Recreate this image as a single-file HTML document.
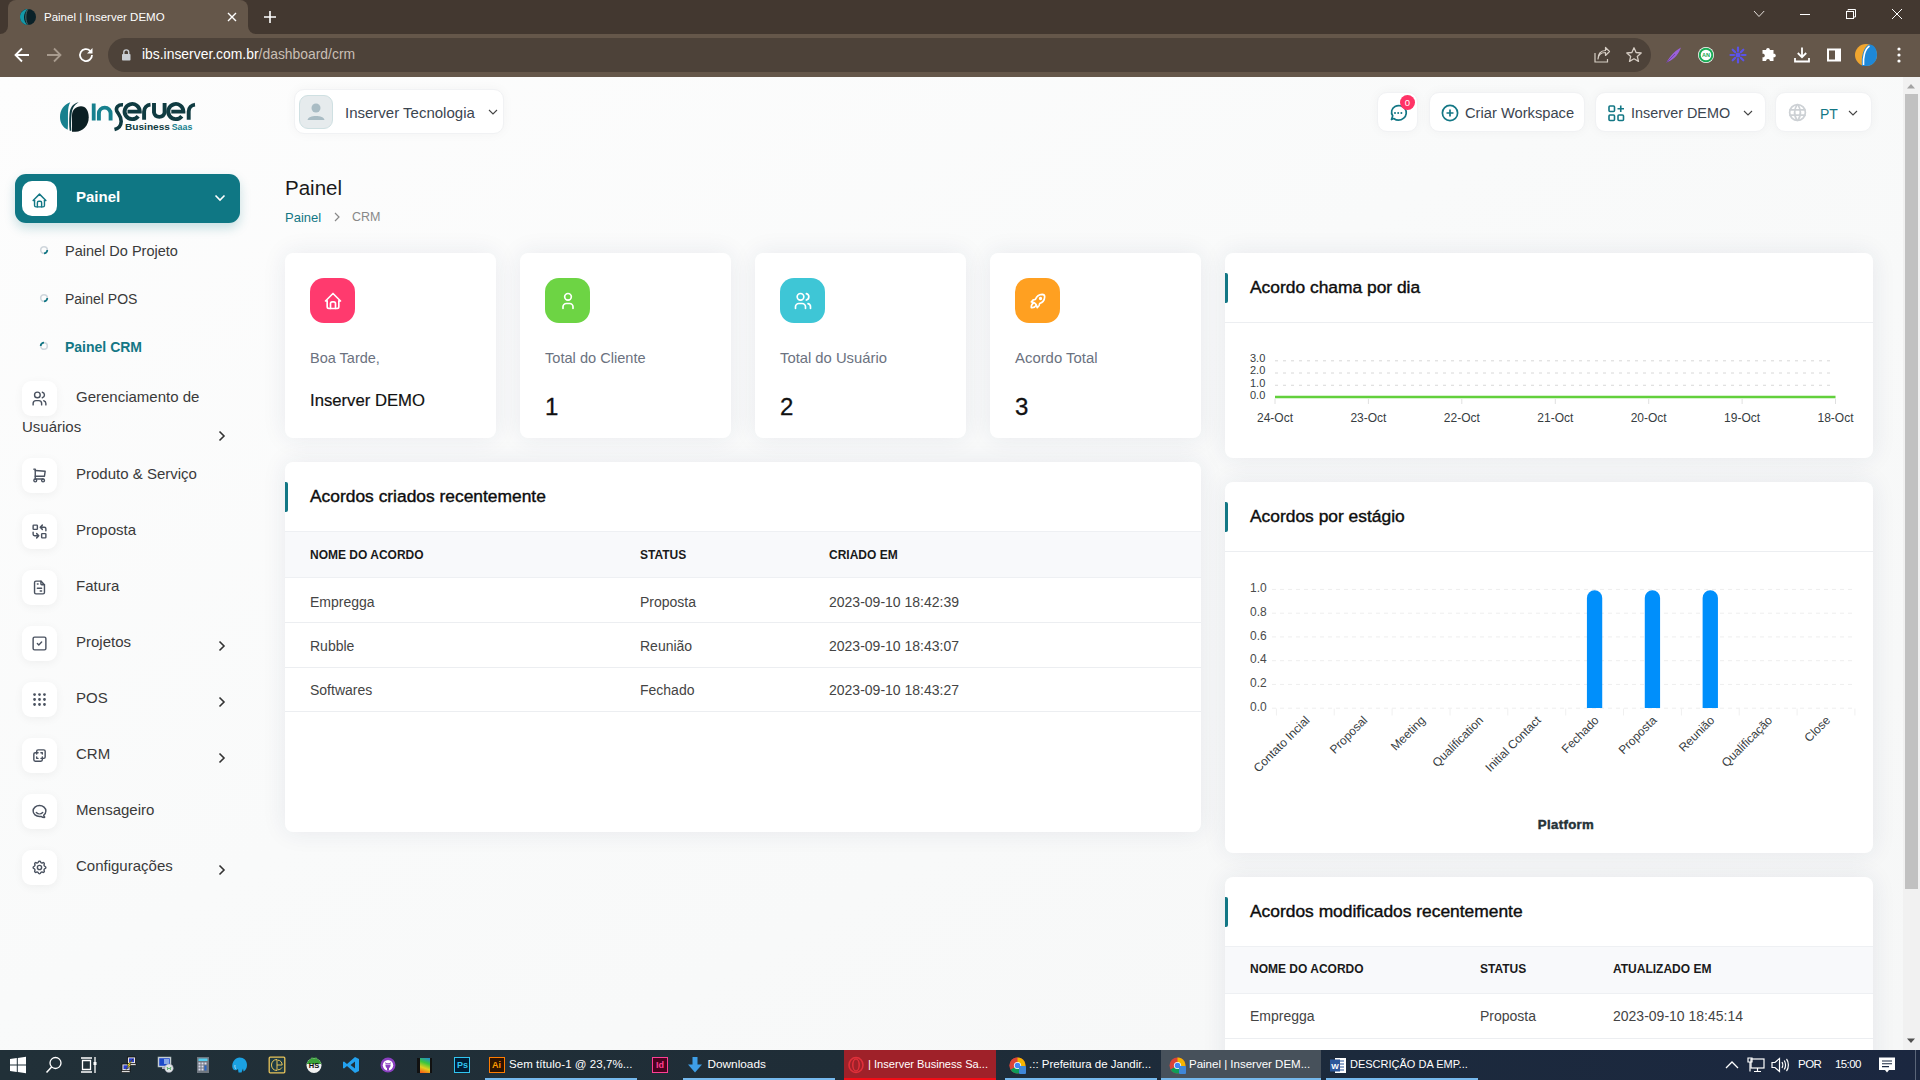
<!DOCTYPE html>
<html><head><meta charset="utf-8">
<style>
*{box-sizing:border-box;margin:0;padding:0}
html,body{width:1920px;height:1080px;overflow:hidden;font-family:"Liberation Sans",sans-serif;background:#f9faf9}
.a{position:absolute}
.t{position:absolute;white-space:nowrap;line-height:1}
svg{position:absolute;overflow:visible}
/* chrome */
#tabbar{left:0;top:0;width:1920px;height:34px;background:#433830}
#tab{left:8px;top:0;width:240px;height:34px;background:#65574a;border-radius:8px 8px 0 0}
#toolbar{left:0;top:34px;width:1920px;height:43px;background:#65574a}
#omni{left:108px;top:38px;width:1543px;height:34px;background:#4d4239;border-radius:17px}
/* page */
#page{left:0;top:77px;width:1903px;height:973px;background:linear-gradient(150deg,#fdfdfd 0%,#f9fafa 45%,#f6f7f7 100%);overflow:hidden}
.card{position:absolute;background:#fff;border-radius:8px;box-shadow:0 0 24px rgba(35,45,90,.085)}
.hdr{position:absolute;background:#fff;border-radius:10px;box-shadow:0 0 12px rgba(0,0,0,.04);border:1px solid #f1f2f4}
.side{position:absolute;left:22px;width:35px;height:35px;background:#fff;border-radius:9px;box-shadow:0 2px 10px rgba(0,0,0,.05)}
.stxt{position:absolute;left:76px;font-size:15px;color:#333;white-space:nowrap;line-height:1}
.chev{position:absolute;left:219px;width:6px;height:10px}
.bar3{position:absolute;left:0;width:3px;height:30px;background:#137785;border-radius:0 2px 2px 0}
.ttl{position:absolute;left:25px;font-size:17.4px;color:#0d0d0d;white-space:nowrap;line-height:1;font-weight:normal;-webkit-text-stroke:.4px #0d0d0d}
.th{position:absolute;font-size:12px;font-weight:bold;color:#1a1a1a;white-space:nowrap;line-height:1;letter-spacing:0}
.td{position:absolute;font-size:14px;color:#444;white-space:nowrap;line-height:1}
.hline{position:absolute;left:0;right:0;height:1px;background:#eceef1}
/* taskbar */
#task{left:0;top:1050px;width:1920px;height:30px;background:linear-gradient(90deg,#213038 0%,#1f2d37 45%,#1c2a3c 70%,#1b2740 100%)}
.tk{position:absolute;top:0;height:30px;color:#fff;font-size:12.5px;line-height:30px;white-space:nowrap}
</style></head><body>
<!-- BROWSER CHROME -->
<div id="tabbar" class="a"></div>
<div id="tab" class="a"></div>
<div id="toolbar" class="a"></div>
<div id="omni" class="a"></div>

<!-- tab flare -->
<div class="a" style="left:0;top:26px;width:8px;height:8px;background:#65574a"></div>
<div class="a" style="left:0;top:18px;width:8px;height:16px;background:#433830;border-radius:0 0 8px 0"></div>
<div class="a" style="left:248px;top:26px;width:8px;height:8px;background:#65574a"></div>
<div class="a" style="left:248px;top:18px;width:8px;height:16px;background:#433830;border-radius:0 0 0 8px"></div>
<svg width="18" height="18" style="left:19px;top:8px"><circle cx="9" cy="9" r="8" fill="#0a2128"/><path d="M8.5 1 C4 1.5 1 5 1 9 C1 13 4 16.5 8 17 C6 14.5 5 12 5 9 C5 6 6.5 3 8.5 1Z" fill="#1498a8"/><path d="M9 1.3 C7.5 3 6.8 6 6.8 9 C6.8 12 7.5 15 9 16.8" fill="none" stroke="#5a7f7f" stroke-width=".8"/></svg>
<div class="t" style="left:44px;top:11.5px;font-size:11.5px;color:#fff">Painel | Inserver DEMO</div>
<svg width="12" height="12" style="left:226px;top:11px"><path d="M2 2 L10 10 M10 2 L2 10" stroke="#fff" stroke-width="1.4"/></svg>
<svg width="16" height="16" style="left:262px;top:9px"><path d="M8 2 V14 M2 8 H14" stroke="#fff" stroke-width="1.6"/></svg>
<svg width="1920" height="34" style="left:0;top:0">
<path d="M1754 11 L1759 16.5 L1764.2 11" fill="none" stroke="#e6e1dc" stroke-width="1"/>
<path d="M1800 14.5 H1810" stroke="#fff" stroke-width="1"/>
<path d="M1848 10.5 V9.5 H1855.5 V17 H1854" fill="none" stroke="#fff" stroke-width="1"/>
<rect x="1846.5" y="11.5" width="7" height="7" fill="none" stroke="#fff" stroke-width="1"/>
<path d="M1892 9 L1902 19 M1902 9 L1892 19" stroke="#fff" stroke-width="1"/>
</svg>
<!-- toolbar icons -->
<svg width="18" height="18" style="left:13px;top:46px"><path d="M16 9 H3 M9 2.5 L2.5 9 L9 15.5" fill="none" stroke="#fff" stroke-width="1.8"/></svg>
<svg width="18" height="18" style="left:45px;top:46px"><path d="M2 9 H15 M9 2.5 L15.5 9 L9 15.5" fill="none" stroke="#a89b8e" stroke-width="1.8"/></svg>
<svg width="18" height="18" style="left:77px;top:46px"><path d="M15 9 A6 6 0 1 1 13.2 4.8" fill="none" stroke="#fff" stroke-width="1.8"/><path d="M15.5 2 V7.5 H10 Z" fill="#fff"/></svg>
<svg width="12" height="14" style="left:120px;top:48px"><rect x="2" y="6" width="8.5" height="6.5" rx=".8" fill="#c9ced4"/><path d="M3.8 6.5 V4.3 A2.45 2.45 0 0 1 8.7 4.3 V6.5" fill="none" stroke="#c9ced4" stroke-width="1.4"/></svg>
<div class="t" style="left:142px;top:47.8px;font-size:13.9px;color:#fff">ibs.inserver.com.br<span style="color:#c9bfb5">/dashboard/crm</span></div>
<svg width="18" height="18" style="left:1593px;top:46px"><path d="M2 7 V16 H14.5 V13" fill="none" stroke="#d6cdc4" stroke-width="1.2"/><path d="M5 13 C5.5 8.5 8.5 6.5 12.5 6.5 V9.5 L16.5 5.5 L12.5 1.5 V4.5 C7.5 4.5 5 8 5 13Z" fill="none" stroke="#d6cdc4" stroke-width="1.2" stroke-linejoin="round"/></svg>
<svg width="18" height="18" style="left:1625px;top:46px"><path d="M9 1.8 L11.1 6.5 L16.2 7 L12.3 10.4 L13.5 15.4 L9 12.8 L4.5 15.4 L5.7 10.4 L1.8 7 L6.9 6.5 Z" fill="none" stroke="#d6cdc4" stroke-width="1.3" stroke-linejoin="round"/></svg>
<svg width="18" height="18" style="left:1665px;top:46px"><path d="M1.5 16.5 C4 12 8 6 16 1.5 C14 7 10 13 3.5 15.5 Z" fill="#9b62d9"/><path d="M1.5 16.5 L10 8" stroke="#6c3aa8" stroke-width=".8"/></svg>
<svg width="18" height="18" style="left:1697px;top:46px"><circle cx="9" cy="9" r="8" fill="#fff"/><circle cx="9" cy="9" r="6.3" fill="none" stroke="#1aaa55" stroke-width="2"/><text x="9" y="11.3" font-size="5.5" font-weight="bold" fill="#1aaa55" text-anchor="middle" font-family="Liberation Sans">AN</text></svg>
<svg width="18" height="18" style="left:1729px;top:46px"><g stroke="#5b53e8" stroke-width="2.2" stroke-linecap="round"><path d="M9 1.5 V5 M9 13 V16.5 M1.5 9 H5 M13 9 H16.5 M3.7 3.7 L6.2 6.2 M11.8 11.8 L14.3 14.3 M3.7 14.3 L6.2 11.8 M11.8 6.2 L14.3 3.7"/></g><circle cx="9" cy="9" r="2.5" fill="#5b53e8"/></svg>
<svg width="18" height="18" style="left:1761px;top:46px"><path d="M7 2 C8.5 2 9 3 8.8 4 H12.5 V7.7 C13.5 7.5 14.8 8 14.8 9.5 C14.8 11 13.5 11.5 12.5 11.3 V15 H8.8 C9 14 8.5 13 7 13 C5.5 13 5 14 5.2 15 H1.5 V11.3 C2.5 11.5 3.8 11 3.8 9.5 C3.8 8 2.5 7.5 1.5 7.7 V4 H5.2 C5 3 5.5 2 7 2Z" fill="#fff"/></svg>
<svg width="18" height="18" style="left:1793px;top:46px"><path d="M9 1.5 V11 M4.8 7 L9 11.2 L13.2 7 M2 12 V15.5 H16 V12" fill="none" stroke="#fff" stroke-width="1.8"/></svg>
<svg width="18" height="18" style="left:1825px;top:46px"><rect x="2" y="2.5" width="14" height="13" fill="#fff"/><rect x="4" y="4.5" width="6" height="9" fill="#65574a"/></svg>
<svg width="24" height="24" style="left:1854px;top:43px"><circle cx="12" cy="12" r="11" fill="#f0a630"/><path d="M8 23 C7 15 9 4 15 1.5 C19 1 23 5 23 12 C23 18 19 22.5 13 23Z" fill="#1e88d8"/><path d="M9.5 22 C9 15 10.5 6 15.5 3" fill="none" stroke="#fff" stroke-width="1.6"/></svg>
<svg width="6" height="18" style="left:1896px;top:46px"><circle cx="3" cy="3" r="1.6" fill="#fff"/><circle cx="3" cy="9" r="1.6" fill="#fff"/><circle cx="3" cy="15" r="1.6" fill="#fff"/></svg>


<!-- PAGE -->
<div id="page" class="a"></div>

<!-- logo -->
<svg width="200" height="140" style="left:0;top:0" viewBox="0 0 200 140">
 <path d="M70.3 102.3 C64 104.5 60 110 60 117 C60 123 63 127.5 67.7 129.7 C68.3 124 67.8 118 68 112 C68.2 108 68.8 105 70.3 102.3 Z" fill="#17808e"/>
 <path d="M78.7 102.3 C73 103.5 70 107.5 69.5 114 C69 120 69.2 126 69.7 130.7 L71.3 130.7 C70.9 125 71.1 120 71.6 114 C72.1 108.5 74.6 104.5 78.7 102.3 Z" fill="#0f3b41"/>
 <path d="M72 131.7 V115 C72 110 76 106.3 81 106.3 C86 106.3 88.7 111 88.7 117.5 C88.7 125.5 83 131.7 75.5 131.7 Z" fill="#0b1f23"/>
 <rect x="91.8" y="103.5" width="3.8" height="17" fill="#17808e"/>
 <path d="M98.9 120.5 V113.5 A5.8 5.8 0 0 1 110.6 113.5 V120.5" fill="none" stroke="#17808e" stroke-width="3.9"/>
 <path d="M123 104.8 C118 104.5 115.5 107.5 116.8 111 C118 114 121.5 116 121.2 121.5 C121 126 118.5 128.5 114.5 129.5" fill="none" stroke="#0f3b41" stroke-width="3.6" stroke-linecap="butt"/>
 <path d="M127.5 111.6 H139.8 A7.6 7.6 0 1 0 138.2 116.2" fill="none" stroke="#0f3b41" stroke-width="3.9"/>
 <path d="M144.1 119.7 V111.5 A7 7 0 0 1 150.5 104.6" fill="none" stroke="#0f3b41" stroke-width="3.9"/>
 <path d="M154 103 V112.5 A5.4 5.4 0 0 0 164.6 112.5 V103" fill="none" stroke="#0f3b41" stroke-width="3.9"/>
 <path d="M171.3 111.6 H183.4 A7.6 7.6 0 1 0 181.8 116.2" fill="none" stroke="#0f3b41" stroke-width="3.9"/>
 <path d="M188.7 119.7 V111.5 A7 7 0 0 1 195 104.6" fill="none" stroke="#0f3b41" stroke-width="3.9"/>
 <text x="125" y="129.9" font-family="Liberation Sans" font-weight="bold" font-size="9.6" fill="#0f3b41" textLength="45" lengthAdjust="spacingAndGlyphs">Business</text>
 <text x="171.7" y="129.9" font-family="Liberation Sans" font-weight="bold" font-size="9.6" fill="#17808e" textLength="20.6" lengthAdjust="spacingAndGlyphs">Saas</text>
</svg>

<!-- header dropdown -->
<div class="hdr" style="left:294px;top:89px;width:210px;height:45px"></div>
<div class="a" style="left:299px;top:95px;width:34px;height:34px;background:#e6ebed;border:1px solid #cfe0e2;border-radius:9px"></div>
<svg width="34" height="34" style="left:299px;top:95px"><circle cx="17" cy="13" r="4.5" fill="#a9bcc4"/><path d="M8.5 25 C9 19.5 25 19.5 25.5 25 Z" fill="#a9bcc4"/></svg>
<div class="t" style="left:345px;top:104.8px;font-size:15px;color:#3b4550">Inserver Tecnologia</div>
<svg width="10" height="6" style="left:488px;top:109px"><path d="M1 1 L5 5 L9 1" fill="none" stroke="#444" stroke-width="1.1"/></svg>

<!-- right header -->
<div class="hdr" style="left:1377px;top:91.5px;width:41px;height:40.5px"></div>
<svg width="20" height="20" style="left:1388px;top:103px"><path d="M3.5 16.5 L4.7 12.8 C2.5 9.5 3.6 5.3 7 3.5 C10.4 1.7 14.7 2.6 16.9 5.6 C19.1 8.6 18.6 12.7 15.7 15.1 C12.8 17.5 8.7 17.6 5.7 15.5 Z" fill="none" stroke="#137785" stroke-width="1.7" stroke-linejoin="round"/><circle cx="7" cy="10" r="1" fill="#137785"/><circle cx="10.2" cy="10" r="1" fill="#137785"/><circle cx="13.4" cy="10" r="1" fill="#137785"/></svg>
<div class="a" style="left:1400px;top:95px;width:15px;height:15px;border-radius:50%;background:#ff3366"></div>
<div class="t" style="left:1400px;top:97.5px;width:15px;text-align:center;font-size:9.5px;color:#fff">0</div>

<div class="hdr" style="left:1429px;top:91.5px;width:156px;height:40.5px"></div>
<svg width="18" height="18" style="left:1441px;top:104px"><circle cx="9" cy="9" r="7.6" fill="none" stroke="#137785" stroke-width="1.7"/><path d="M9 5.5 V12.5 M5.5 9 H12.5" stroke="#137785" stroke-width="1.7"/></svg>
<div class="t" style="left:1465px;top:105.5px;font-size:14.7px;color:#3b4550">Criar Workspace</div>

<div class="hdr" style="left:1595px;top:91.5px;width:171px;height:40.5px"></div>
<svg width="17" height="17" style="left:1608px;top:105px"><rect x="1" y="1" width="5.5" height="5.5" rx="1" fill="none" stroke="#137785" stroke-width="1.6"/><rect x="1" y="10" width="5.5" height="5.5" rx="1" fill="none" stroke="#137785" stroke-width="1.6"/><rect x="10" y="10" width="5.5" height="5.5" rx="1" fill="none" stroke="#137785" stroke-width="1.6"/><path d="M12.75 0.5 V7 M9.5 3.75 H16" stroke="#137785" stroke-width="1.6"/></svg>
<div class="t" style="left:1631px;top:105.5px;font-size:14.4px;color:#3b4550">Inserver DEMO</div>
<svg width="10" height="6" style="left:1743px;top:109.5px"><path d="M1 1 L5 5 L9 1" fill="none" stroke="#444" stroke-width="1.1"/></svg>

<div class="hdr" style="left:1775px;top:91.5px;width:97px;height:40.5px"></div>
<svg width="21" height="21" viewBox="0 0 24 24" style="left:1786.5px;top:101.5px" fill="none" stroke="#cdd1d5" stroke-width="2" stroke-linecap="round" stroke-linejoin="round"><path d="M3 12a9 9 0 1 0 18 0a9 9 0 0 0 -18 0"/><path d="M3.6 9h16.8"/><path d="M3.6 15h16.8"/><path d="M11.5 3a17 17 0 0 0 0 18"/><path d="M12.5 3a17 17 0 0 1 0 18"/></svg>
<div class="t" style="left:1820px;top:106.5px;font-size:14px;color:#137785">PT</div>
<svg width="10" height="6" style="left:1848px;top:109.5px"><path d="M1 1 L5 5 L9 1" fill="none" stroke="#444" stroke-width="1.1"/></svg>

<!-- title -->
<div class="t" style="left:285px;top:178.4px;font-size:20.5px;color:#1a1a1a">Painel</div>
<div class="t" style="left:285px;top:211.3px;font-size:13px;color:#137785">Painel</div>
<svg width="6" height="10" style="left:334px;top:212px"><path d="M1 1 L5 5 L1 9" fill="none" stroke="#888" stroke-width="1.2"/></svg>
<div class="t" style="left:352px;top:211.3px;font-size:12.5px;color:#888">CRM</div>

<!-- SIDEBAR -->
<div class="a" style="left:15px;top:174px;width:225px;height:49px;background:#0f7784;border-radius:11px;box-shadow:0 5px 11px rgba(15,119,132,.22)"></div>
<div class="a" style="left:22px;top:181px;width:35px;height:35px;background:#fff;border-radius:10px"></div>
<svg width="17" height="17" viewBox="0 0 24 24" style="left:31px;top:191.5px" fill="none" stroke="#137785" stroke-width="2" stroke-linecap="round" stroke-linejoin="round"><path d="M5 12l-2 0l9 -9l9 9l-2 0"/><path d="M5 12v7a2 2 0 0 0 2 2h10a2 2 0 0 0 2 -2v-7"/><path d="M9 21v-6a2 2 0 0 1 2 -2h2a2 2 0 0 1 2 2v6"/></svg>
<div class="t" style="left:76px;top:189.2px;font-size:15px;font-weight:bold;color:#fff">Painel</div>
<svg width="12" height="8" style="left:214px;top:194px"><path d="M1.5 1.5 L6 6 L10.5 1.5" fill="none" stroke="#fff" stroke-width="1.6"/></svg>

<svg width="10" height="10" style="left:39px;top:245px"><circle cx="5" cy="5" r="3.3" fill="none" stroke="#cfd6dc" stroke-width="1.6"/><path d="M8.3 5 A3.3 3.3 0 0 1 5 8.3" fill="none" stroke="#137785" stroke-width="1.8"/></svg>
<div class="t" style="left:65px;top:244.1px;font-size:14.5px;color:#3a3a3a">Painel Do Projeto</div>
<svg width="10" height="10" style="left:39px;top:293px"><circle cx="5" cy="5" r="3.3" fill="none" stroke="#cfd6dc" stroke-width="1.6"/><path d="M8.3 5 A3.3 3.3 0 0 1 5 8.3" fill="none" stroke="#137785" stroke-width="1.8"/></svg>
<div class="t" style="left:65px;top:292px;font-size:14px;color:#3a3a3a">Painel POS</div>
<svg width="10" height="10" style="left:39px;top:341px"><circle cx="5" cy="5" r="3.3" fill="none" stroke="#cfd6dc" stroke-width="1.6"/><path d="M1.7 5 A3.3 3.3 0 0 1 5 1.7" fill="none" stroke="#137785" stroke-width="1.8"/></svg>
<div class="t" style="left:65px;top:340.1px;font-size:14px;font-weight:bold;color:#137785">Painel CRM</div>

<div class="side" style="top:381px"></div>
<svg width="17" height="17" viewBox="0 0 24 24" style="left:31px;top:390.0px" fill="none" stroke="#4a5260" stroke-width="2" stroke-linecap="round" stroke-linejoin="round"><path d="M9 7m-4 0a4 4 0 1 0 8 0a4 4 0 1 0 -8 0"/><path d="M3 21v-2a4 4 0 0 1 4 -4h4a4 4 0 0 1 4 4v2"/><path d="M16 3.13a4 4 0 0 1 0 7.75"/><path d="M21 21v-2a4 4 0 0 0 -3 -3.85"/></svg>
<div class="t" style="left:76px;top:389.3px;font-size:15px;color:#3a3a3a">Gerenciamento de</div>
<div class="t" style="left:22px;top:419.2px;font-size:15px;color:#3a3a3a">Usuários</div>
<svg width="8" height="12" style="left:218px;top:430px"><path d="M1.5 1.5 L6 6 L1.5 10.5" fill="none" stroke="#333" stroke-width="1.6"/></svg>

<div class="side" style="top:458px"></div>
<svg width="17" height="17" viewBox="0 0 24 24" style="left:31px;top:467.0px" fill="none" stroke="#4a5260" stroke-width="2" stroke-linecap="round" stroke-linejoin="round"><path d="M6 19m-2 0a2 2 0 1 0 4 0a2 2 0 1 0 -4 0"/><path d="M17 19m-2 0a2 2 0 1 0 4 0a2 2 0 1 0 -4 0"/><path d="M17 17h-11v-14h-2"/><path d="M6 5l14 1l-1 7h-13"/></svg>
<div class="t" style="left:76px;top:466px;font-size:15px;color:#3a3a3a">Produto &amp; Serviço</div>

<div class="side" style="top:514px"></div>
<svg width="17" height="17" viewBox="0 0 24 24" style="left:31px;top:523.0px" fill="none" stroke="#4a5260" stroke-width="2" stroke-linecap="round" stroke-linejoin="round"><path d="M3 3m0 1a1 1 0 0 1 1 -1h4a1 1 0 0 1 1 1v4a1 1 0 0 1 -1 1h-4a1 1 0 0 1 -1 -1z"/><path d="M15 15m0 1a1 1 0 0 1 1 -1h4a1 1 0 0 1 1 1v4a1 1 0 0 1 -1 1h-4a1 1 0 0 1 -1 -1z"/><path d="M21 11v-3a2 2 0 0 0 -2 -2h-6l3 3m0 -6l-3 3"/><path d="M3 13v3a2 2 0 0 0 2 2h6l-3 -3m0 6l3 -3"/></svg>
<div class="t" style="left:76px;top:522.3px;font-size:15px;color:#3a3a3a">Proposta</div>

<div class="side" style="top:570px"></div>
<svg width="17" height="17" viewBox="0 0 24 24" style="left:31px;top:579.0px" fill="none" stroke="#4a5260" stroke-width="2" stroke-linecap="round" stroke-linejoin="round"><path d="M14 3v4a1 1 0 0 0 1 1h4"/><path d="M17 21h-10a2 2 0 0 1 -2 -2v-14a2 2 0 0 1 2 -2h7l5 5v11a2 2 0 0 1 -2 2z"/><path d="M9 7l1 0"/><path d="M9 13l6 0"/><path d="M13 17l2 0"/></svg>
<div class="t" style="left:76px;top:578.3px;font-size:15px;color:#3a3a3a">Fatura</div>

<div class="side" style="top:626px"></div>
<svg width="17" height="17" viewBox="0 0 24 24" style="left:31px;top:635.0px" fill="none" stroke="#4a5260" stroke-width="2" stroke-linecap="round" stroke-linejoin="round"><path d="M3 3m0 2a2 2 0 0 1 2 -2h14a2 2 0 0 1 2 2v14a2 2 0 0 1 -2 2h-14a2 2 0 0 1 -2 -2z"/><path d="M9 12l2 2l4 -4"/></svg>
<div class="t" style="left:76px;top:634.3px;font-size:15px;color:#3a3a3a">Projetos</div>
<svg width="8" height="12" style="left:218px;top:640px"><path d="M1.5 1.5 L6 6 L1.5 10.5" fill="none" stroke="#333" stroke-width="1.6"/></svg>

<div class="side" style="top:682px"></div>
<svg width="17" height="17" viewBox="0 0 24 24" style="left:31px;top:691.0px" fill="none" stroke="#4a5260" stroke-width="2" stroke-linecap="round" stroke-linejoin="round"><path d="M5 5m-1 0a1 1 0 1 0 2 0a1 1 0 1 0 -2 0"/><path d="M12 5m-1 0a1 1 0 1 0 2 0a1 1 0 1 0 -2 0"/><path d="M19 5m-1 0a1 1 0 1 0 2 0a1 1 0 1 0 -2 0"/><path d="M5 12m-1 0a1 1 0 1 0 2 0a1 1 0 1 0 -2 0"/><path d="M12 12m-1 0a1 1 0 1 0 2 0a1 1 0 1 0 -2 0"/><path d="M19 12m-1 0a1 1 0 1 0 2 0a1 1 0 1 0 -2 0"/><path d="M5 19m-1 0a1 1 0 1 0 2 0a1 1 0 1 0 -2 0"/><path d="M12 19m-1 0a1 1 0 1 0 2 0a1 1 0 1 0 -2 0"/><path d="M19 19m-1 0a1 1 0 1 0 2 0a1 1 0 1 0 -2 0"/></svg>
<div class="t" style="left:76px;top:690.3px;font-size:15px;color:#3a3a3a">POS</div>
<svg width="8" height="12" style="left:218px;top:696px"><path d="M1.5 1.5 L6 6 L1.5 10.5" fill="none" stroke="#333" stroke-width="1.6"/></svg>

<div class="side" style="top:738px"></div>
<svg width="17" height="17" viewBox="0 0 24 24" style="left:31px;top:747.0px" fill="none" stroke="#4a5260" stroke-width="2" stroke-linecap="round" stroke-linejoin="round"><path d="M16 16v2a2 2 0 0 1 -2 2h-8a2 2 0 0 1 -2 -2v-8a2 2 0 0 1 2 -2h2v-2a2 2 0 0 1 2 -2h8a2 2 0 0 1 2 2v8a2 2 0 0 1 -2 2h-2"/><path d="M10 8l-2 0l0 2"/><path d="M8 14l0 2l2 0"/><path d="M14 8l2 0l0 2"/><path d="M16 14l0 2l-2 0"/></svg>
<div class="t" style="left:76px;top:746.3px;font-size:15px;color:#3a3a3a">CRM</div>
<svg width="8" height="12" style="left:218px;top:752px"><path d="M1.5 1.5 L6 6 L1.5 10.5" fill="none" stroke="#333" stroke-width="1.6"/></svg>

<div class="side" style="top:794px"></div>
<svg width="17" height="17" viewBox="0 0 24 24" style="left:31px;top:803.0px" fill="none" stroke="#4a5260" stroke-width="2" stroke-linecap="round" stroke-linejoin="round"><path d="M17.802 17.292s.077 -.055 .2 -.149c1.843 -1.425 3 -3.49 3 -5.789c0 -4.286 -4.03 -7.764 -9 -7.764c-4.97 0 -9 3.478 -9 7.764c0 4.288 4.03 7.646 9 7.646c.424 0 1.12 -.028 2.088 -.084c1.262 .82 3.104 1.493 4.716 1.493c.499 0 .734 -.41 .414 -.828c-.486 -.596 -1.156 -1.551 -1.416 -2.29z"/><path d="M7.5 13.5c2.5 2.5 6.5 2.5 9 0"/></svg>
<div class="t" style="left:76px;top:802.3px;font-size:15px;color:#3a3a3a">Mensageiro</div>

<div class="side" style="top:850px"></div>
<svg width="17" height="17" viewBox="0 0 24 24" style="left:31px;top:859.0px" fill="none" stroke="#4a5260" stroke-width="2" stroke-linecap="round" stroke-linejoin="round"><path d="M10.325 4.317c.426 -1.756 2.924 -1.756 3.35 0a1.724 1.724 0 0 0 2.573 1.066c1.543 -.94 3.31 .826 2.37 2.37a1.724 1.724 0 0 0 1.065 2.572c1.756 .426 1.756 2.924 0 3.35a1.724 1.724 0 0 0 -1.066 2.573c.94 1.543 -.826 3.31 -2.37 2.37a1.724 1.724 0 0 0 -2.572 1.065c-.426 1.756 -2.924 1.756 -3.35 0a1.724 1.724 0 0 0 -2.573 -1.066c-1.543 .94 -3.31 -.826 -2.37 -2.37a1.724 1.724 0 0 0 -1.065 -2.572c-1.756 -.426 -1.756 -2.924 0 -3.35a1.724 1.724 0 0 0 1.066 -2.573c-.94 -1.543 .826 -3.31 2.37 -2.37c1 .608 2.296 .07 2.572 -1.065z"/><path d="M9 12a3 3 0 1 0 6 0a3 3 0 0 0 -6 0"/></svg>
<div class="t" style="left:76px;top:858.3px;font-size:15px;color:#3a3a3a">Configurações</div>
<svg width="8" height="12" style="left:218px;top:864px"><path d="M1.5 1.5 L6 6 L1.5 10.5" fill="none" stroke="#333" stroke-width="1.6"/></svg>

<!-- CONTENT -->
<!-- stat cards -->
<div class="card" style="left:285px;top:253px;width:211px;height:185px"></div>
<div class="card" style="left:520px;top:253px;width:211px;height:185px"></div>
<div class="card" style="left:755px;top:253px;width:211px;height:185px"></div>
<div class="card" style="left:990px;top:253px;width:211px;height:185px"></div>

<div class="a" style="left:310px;top:278px;width:45px;height:45px;border-radius:14px;background:#ff3a6e"></div>
<svg width="20" height="20" viewBox="0 0 24 24" style="left:322.5px;top:290.8px" fill="none" stroke="#fff" stroke-width="2" stroke-linecap="round" stroke-linejoin="round"><path d="M5 12l-2 0l9 -9l9 9l-2 0"/><path d="M5 12v7a2 2 0 0 0 2 2h10a2 2 0 0 0 2 -2v-7"/><path d="M9 21v-6a2 2 0 0 1 2 -2h2a2 2 0 0 1 2 2v6"/></svg>
<div class="a" style="left:545px;top:278px;width:45px;height:45px;border-radius:14px;background:#6dd444"></div>
<svg width="20" height="20" viewBox="0 0 24 24" style="left:557.5px;top:290.8px" fill="none" stroke="#fff" stroke-width="2" stroke-linecap="round" stroke-linejoin="round"><path d="M8 7a4 4 0 1 0 8 0a4 4 0 0 0 -8 0"/><path d="M6 21v-2a4 4 0 0 1 4 -4h4a4 4 0 0 1 4 4v2"/></svg>
<div class="a" style="left:780px;top:278px;width:45px;height:45px;border-radius:14px;background:#3ec6d6"></div>
<svg width="20" height="20" viewBox="0 0 24 24" style="left:792.5px;top:290.8px" fill="none" stroke="#fff" stroke-width="2" stroke-linecap="round" stroke-linejoin="round"><path d="M9 7m-4 0a4 4 0 1 0 8 0a4 4 0 1 0 -8 0"/><path d="M3 21v-2a4 4 0 0 1 4 -4h4a4 4 0 0 1 4 4v2"/><path d="M16 3.13a4 4 0 0 1 0 7.75"/><path d="M21 21v-2a4 4 0 0 0 -3 -3.85"/></svg>
<div class="a" style="left:1015px;top:278px;width:45px;height:45px;border-radius:14px;background:#ffa021"></div>
<svg width="20" height="20" viewBox="0 0 24 24" style="left:1027.5px;top:290.8px" fill="none" stroke="#fff" stroke-width="2" stroke-linecap="round" stroke-linejoin="round"><path d="M4 13a8 8 0 0 1 7 7a6 6 0 0 0 3 -5a9 9 0 0 0 6 -8a3 3 0 0 0 -3 -3a9 9 0 0 0 -8 6a6 6 0 0 0 -5 3"/><path d="M7 14a6 6 0 0 0 -3 6a6 6 0 0 0 6 -3"/><path d="M15 9m-1 0a1 1 0 1 0 2 0a1 1 0 1 0 -2 0"/></svg>

<div class="t" style="left:310px;top:350.7px;font-size:14.5px;color:#6b7280">Boa Tarde,</div>
<div class="t" style="left:310px;top:393.4px;font-size:16.7px;color:#111;-webkit-text-stroke:.2px #111">Inserver DEMO</div>
<div class="t" style="left:545px;top:350.7px;font-size:14.6px;color:#6b7280">Total do Cliente</div>
<div class="t" style="left:545px;top:394.7px;font-size:24px;color:#111;-webkit-text-stroke:.3px #111">1</div>
<div class="t" style="left:780px;top:350.7px;font-size:14.8px;color:#6b7280">Total do Usuário</div>
<div class="t" style="left:780px;top:394.7px;font-size:24px;color:#111;-webkit-text-stroke:.3px #111">2</div>
<div class="t" style="left:1015px;top:350.7px;font-size:14.9px;color:#6b7280">Acordo Total</div>
<div class="t" style="left:1015px;top:394.7px;font-size:24px;color:#111;-webkit-text-stroke:.3px #111">3</div>

<!-- table card -->
<div class="card" style="left:285px;top:462px;width:916px;height:370px;overflow:hidden">
 <div class="bar3" style="top:20px"></div>
 <div class="ttl" style="top:25.8px">Acordos criados recentemente</div>
 <div class="a" style="left:0;top:69px;width:916px;height:47px;background:#f8f9fb;border-top:1px solid #eef0f3;border-bottom:1px solid #eef0f3"></div>
 <div class="th" style="left:25px;top:87.1px">NOME DO ACORDO</div>
 <div class="th" style="left:355px;top:87.1px">STATUS</div>
 <div class="th" style="left:544px;top:87.1px">CRIADO EM</div>
 <div class="td" style="left:25px;top:132.9px">Empregga</div>
 <div class="td" style="left:355px;top:132.9px">Proposta</div>
 <div class="td" style="left:544px;top:132.9px">2023-09-10 18:42:39</div>
 <div class="hline" style="top:160px"></div>
 <div class="td" style="left:25px;top:176.9px">Rubble</div>
 <div class="td" style="left:355px;top:176.9px">Reunião</div>
 <div class="td" style="left:544px;top:176.9px">2023-09-10 18:43:07</div>
 <div class="hline" style="top:205px"></div>
 <div class="td" style="left:25px;top:220.9px">Softwares</div>
 <div class="td" style="left:355px;top:220.9px">Fechado</div>
 <div class="td" style="left:544px;top:220.9px">2023-09-10 18:43:27</div>
 <div class="hline" style="top:249px"></div>
</div>

<!-- chart 1 -->
<div class="card" style="left:1225px;top:253px;width:648px;height:205px;overflow:hidden">
 <div class="bar3" style="top:20px"></div>
 <div class="ttl" style="top:26.1px">Acordo chama por dia</div>
 <div class="hline" style="top:69px"></div>
</div>


<!-- chart 2 -->
<div class="card" style="left:1225px;top:482px;width:648px;height:371px;overflow:hidden">
 <div class="bar3" style="top:20px"></div>
 <div class="ttl" style="top:25.7px">Acordos por estágio</div>
 <div class="hline" style="top:69px"></div>
</div>
<svg width="1920" height="1080" style="left:0;top:0;pointer-events:none" font-family="Liberation Sans">
<text x="1250" y="361.8" font-size="11" fill="#373d3f">3.0</text>
<text x="1250" y="373.9" font-size="11" fill="#373d3f">2.0</text>
<text x="1250" y="386.7" font-size="11" fill="#373d3f">1.0</text>
<text x="1250" y="398.75" font-size="11" fill="#373d3f">0.0</text>
<line x1="1275" x2="1835" y1="360.8" y2="360.8" stroke="#d8d8d8" stroke-dasharray="3 5"/>
<line x1="1275" x2="1835" y1="373" y2="373" stroke="#d8d8d8" stroke-dasharray="3 5"/>
<line x1="1275" x2="1835" y1="385.25" y2="385.25" stroke="#d8d8d8" stroke-dasharray="3 5"/>
<line x1="1275" x2="1835.5" y1="397.1" y2="397.1" stroke="#62d03c" stroke-width="2.5"/>
<line x1="1275.0" x2="1275.0" y1="398.5" y2="404" stroke="#e0e0e0"/>
<text x="1275.0" y="422" font-size="12" fill="#373d3f" text-anchor="middle">24-Oct</text>
<line x1="1368.4" x2="1368.4" y1="398.5" y2="404" stroke="#e0e0e0"/>
<text x="1368.4" y="422" font-size="12" fill="#373d3f" text-anchor="middle">23-Oct</text>
<line x1="1461.8" x2="1461.8" y1="398.5" y2="404" stroke="#e0e0e0"/>
<text x="1461.8" y="422" font-size="12" fill="#373d3f" text-anchor="middle">22-Oct</text>
<line x1="1555.3" x2="1555.3" y1="398.5" y2="404" stroke="#e0e0e0"/>
<text x="1555.3" y="422" font-size="12" fill="#373d3f" text-anchor="middle">21-Oct</text>
<line x1="1648.7" x2="1648.7" y1="398.5" y2="404" stroke="#e0e0e0"/>
<text x="1648.7" y="422" font-size="12" fill="#373d3f" text-anchor="middle">20-Oct</text>
<line x1="1742.1" x2="1742.1" y1="398.5" y2="404" stroke="#e0e0e0"/>
<text x="1742.1" y="422" font-size="12" fill="#373d3f" text-anchor="middle">19-Oct</text>
<line x1="1835.5" x2="1835.5" y1="398.5" y2="404" stroke="#e0e0e0"/>
<text x="1835.5" y="422" font-size="12" fill="#373d3f" text-anchor="middle">18-Oct</text>
<text x="1250" y="592.0" font-size="12" fill="#4a4a4a">1.0</text>
<line x1="1272" x2="1855" y1="589.4" y2="589.4" stroke="#eeeeee" stroke-dasharray="4 4"/>
<text x="1250" y="615.8" font-size="12" fill="#4a4a4a">0.8</text>
<line x1="1272" x2="1855" y1="613.2" y2="613.2" stroke="#eeeeee" stroke-dasharray="4 4"/>
<text x="1250" y="639.5" font-size="12" fill="#4a4a4a">0.6</text>
<line x1="1272" x2="1855" y1="636.9" y2="636.9" stroke="#eeeeee" stroke-dasharray="4 4"/>
<text x="1250" y="663.3" font-size="12" fill="#4a4a4a">0.4</text>
<line x1="1272" x2="1855" y1="660.7" y2="660.7" stroke="#eeeeee" stroke-dasharray="4 4"/>
<text x="1250" y="687.0" font-size="12" fill="#4a4a4a">0.2</text>
<line x1="1272" x2="1855" y1="684.4" y2="684.4" stroke="#eeeeee" stroke-dasharray="4 4"/>
<text x="1250" y="710.8" font-size="12" fill="#4a4a4a">0.0</text>
<line x1="1272" x2="1855" y1="708.2" y2="708.2" stroke="#eeeeee" stroke-dasharray="4 4"/>
<line x1="1276.4" x2="1276.4" y1="708.5" y2="715.5" stroke="#f0f0f0"/>
<line x1="1334.2" x2="1334.2" y1="708.5" y2="715.5" stroke="#f0f0f0"/>
<line x1="1392.1" x2="1392.1" y1="708.5" y2="715.5" stroke="#f0f0f0"/>
<line x1="1450.0" x2="1450.0" y1="708.5" y2="715.5" stroke="#f0f0f0"/>
<line x1="1507.8" x2="1507.8" y1="708.5" y2="715.5" stroke="#f0f0f0"/>
<line x1="1565.7" x2="1565.7" y1="708.5" y2="715.5" stroke="#f0f0f0"/>
<line x1="1623.5" x2="1623.5" y1="708.5" y2="715.5" stroke="#f0f0f0"/>
<line x1="1681.4" x2="1681.4" y1="708.5" y2="715.5" stroke="#f0f0f0"/>
<line x1="1739.2" x2="1739.2" y1="708.5" y2="715.5" stroke="#f0f0f0"/>
<line x1="1797.1" x2="1797.1" y1="708.5" y2="715.5" stroke="#f0f0f0"/>
<line x1="1854.9" x2="1854.9" y1="708.5" y2="715.5" stroke="#f0f0f0"/>
<text x="1310.3" y="721.0" font-size="12" fill="#373d3f" text-anchor="end" transform="rotate(-45 1310.3 721.0)">Contato Incial</text>
<text x="1368.2" y="721.0" font-size="12" fill="#373d3f" text-anchor="end" transform="rotate(-45 1368.2 721.0)">Proposal</text>
<text x="1426.0" y="721.0" font-size="12" fill="#373d3f" text-anchor="end" transform="rotate(-45 1426.0 721.0)">Meeting</text>
<text x="1483.9" y="721.0" font-size="12" fill="#373d3f" text-anchor="end" transform="rotate(-45 1483.9 721.0)">Qualification</text>
<text x="1541.7" y="721.0" font-size="12" fill="#373d3f" text-anchor="end" transform="rotate(-45 1541.7 721.0)">Initial Contact</text>
<text x="1599.6" y="721.0" font-size="12" fill="#373d3f" text-anchor="end" transform="rotate(-45 1599.6 721.0)">Fechado</text>
<text x="1657.4" y="721.0" font-size="12" fill="#373d3f" text-anchor="end" transform="rotate(-45 1657.4 721.0)">Proposta</text>
<text x="1715.3" y="721.0" font-size="12" fill="#373d3f" text-anchor="end" transform="rotate(-45 1715.3 721.0)">Reunião</text>
<text x="1773.1" y="721.0" font-size="12" fill="#373d3f" text-anchor="end" transform="rotate(-45 1773.1 721.0)">Qualificação</text>
<text x="1831.0" y="721.0" font-size="12" fill="#373d3f" text-anchor="end" transform="rotate(-45 1831.0 721.0)">Close</text>
<path d="M1586.92 708.1 V598 A7.65 7.65 0 0 1 1602.23 598 V708.1 Z" fill="#008ffb"/>
<path d="M1644.78 708.1 V598 A7.65 7.65 0 0 1 1660.08 598 V708.1 Z" fill="#008ffb"/>
<path d="M1702.62 708.1 V598 A7.65 7.65 0 0 1 1717.93 598 V708.1 Z" fill="#008ffb"/>
<text x="1566" y="829" font-size="13.2" font-weight="bold" fill="#263238" stroke="#263238" stroke-width=".45" letter-spacing=".35" text-anchor="middle">Platform</text>
</svg>

<!-- table 2 -->
<div class="card" style="left:1225px;top:877px;width:648px;height:250px;overflow:hidden">
 <div class="bar3" style="top:20px"></div>
 <div class="ttl" style="top:25.9px">Acordos modificados recentemente</div>
 <div class="a" style="left:0;top:69px;width:648px;height:48px;background:#f8f9fb;border-top:1px solid #eef0f3;border-bottom:1px solid #eef0f3"></div>
 <div class="th" style="left:25px;top:85.9px">NOME DO ACORDO</div>
 <div class="th" style="left:255px;top:85.9px">STATUS</div>
 <div class="th" style="left:388px;top:85.9px">ATUALIZADO EM</div>
 <div class="td" style="left:25px;top:132px">Empregga</div>
 <div class="td" style="left:255px;top:132px">Proposta</div>
 <div class="td" style="left:388px;top:132px">2023-09-10 18:45:14</div>
 <div class="hline" style="top:161px"></div>
</div>



<!-- TASKBAR -->

<!-- scrollbar -->
<div class="a" style="left:1903px;top:77px;width:17px;height:973px;background:#f1f1f1"></div>
<div class="a" style="left:1905px;top:94px;width:13px;height:795px;background:#c1c1c1"></div>
<svg width="10" height="6" style="left:1906px;top:83px"><path d="M1 5.5 L5 1 L9 5.5Z" fill="#a3a3a3"/></svg>
<svg width="10" height="6" style="left:1906px;top:1038px"><path d="M1 0.5 L5 5 L9 0.5Z" fill="#505050"/></svg>
<div id="task" class="a"></div>

<!-- taskbar items -->
<svg width="18" height="18" style="left:9px;top:1056px"><path d="M1 3 L7.8 2 V8.5 H1Z M8.8 1.9 L17 0.8 V8.5 H8.8Z M1 9.5 H7.8 V16 L1 15Z M8.8 9.5 H17 V17.2 L8.8 16.1Z" fill="#fff"/></svg>
<svg width="18" height="18" style="left:45px;top:1056px"><circle cx="10.5" cy="7" r="5.5" fill="none" stroke="#fff" stroke-width="1.3"/><path d="M6.6 10.9 L1.5 16.5" stroke="#fff" stroke-width="1.5"/></svg>
<svg width="20" height="18" style="left:80px;top:1056px"><path d="M1 2 H12 M1 16 H12 M2.5 4.5 H10.5 V13.5 H2.5Z M15 1 V6 M15 9 V17" fill="none" stroke="#fff" stroke-width="1.3"/><rect x="13.5" y="6" width="3" height="3" fill="#fff"/></svg>
<svg width="16" height="17" style="left:121px;top:1056px">
<rect x="6.5" y="1" width="8" height="6.5" fill="#e8e8e8" stroke="#111" stroke-width=".8"/><rect x="8" y="2.3" width="5" height="3.8" fill="#2a3fd0"/><rect x="7" y="7.5" width="8" height="2" fill="#ddd" stroke="#111" stroke-width=".6"/>
<rect x="1" y="8" width="8" height="6.5" fill="#e8e8e8" stroke="#111" stroke-width=".8"/><rect x="2.5" y="9.3" width="5" height="3.8" fill="#2a3fd0"/><rect x="0.5" y="14.5" width="8.5" height="2" fill="#ddd" stroke="#111" stroke-width=".6"/>
<path d="M12 3 L8.5 8.5 L10 9 L5 13.5 L7.5 9.5 L6 9 Z" fill="#f5e42a" stroke="#222" stroke-width=".5"/></svg>
<svg width="17" height="17" style="left:157px;top:1056px"><rect x="1" y="1" width="13" height="10" fill="#d9dde3" stroke="#9aa" stroke-width=".6"/><rect x="2.2" y="2.2" width="10.6" height="7.6" fill="#1c48c9"/><rect x="7" y="3" width="5" height="5" fill="#86a6e6"/><rect x="5" y="11" width="5" height="2" fill="#aab"/><circle cx="12" cy="12.2" r="4.3" fill="#dfe3e6" stroke="#889" stroke-width=".5"/><path d="M9.8 11.5 L11.5 12.5 M14.2 11.5 L12.5 12.5 M10 13.5 L11.4 12.5 M14 13.5 L12.6 12.5" stroke="#2a9d3a" stroke-width="1"/></svg>
<svg width="14" height="18" style="left:196px;top:1056px"><rect x="1" y="1" width="12" height="16" fill="#6f7780"/><rect x="2.5" y="2.5" width="9" height="2.5" fill="#54d0f0"/><g fill="#dde"><rect x="2.5" y="6.5" width="2" height="2"/><rect x="5.5" y="6.5" width="2" height="2"/><rect x="8.5" y="6.5" width="2" height="2"/><rect x="2.5" y="9.5" width="2" height="2"/><rect x="5.5" y="9.5" width="2" height="2"/><rect x="2.5" y="12.5" width="2" height="2"/><rect x="5.5" y="12.5" width="2" height="2"/></g><rect x="8.5" y="9.5" width="2" height="5" fill="#2a66c8"/></svg>
<svg width="17" height="17" style="left:231px;top:1056px"><path d="M8.5 1.5 C13 1.5 16 4.5 16 9 C16 12 14.5 14.5 12.5 15.5 L12 12.5 L10.5 16.5 L7.5 16.5 L7 13 C5 15 2.5 14.5 1.5 12 C0.8 9.5 1.5 6 3.5 4 C4.8 2.5 6.5 1.5 8.5 1.5Z" fill="#1ba1e2"/><path d="M4 9 C3.5 11 4.5 12.5 5 13" stroke="#fff" stroke-width=".6" fill="none"/></svg>
<svg width="18" height="18" style="left:268px;top:1056px"><rect x="1.2" y="1.2" width="15.6" height="15.6" rx="1" fill="#1d3a44" stroke="#e8c45a" stroke-width="1.3"/><path d="M9 3.5 C5.5 3.5 3.5 6 3.5 9 C3.5 12 5.5 14.5 9 14.5 M9 3.5 V14.5 M9 9 H14.2 C14.2 6 12 4.2 9.8 4.2 M9.8 13.8 C11.8 13.8 13.2 12.8 14 11.5" fill="none" stroke="#e8c45a" stroke-width="1"/></svg>
<svg width="18" height="18" style="left:305px;top:1056px"><circle cx="9" cy="9.5" r="7.5" fill="#f2f2f2"/><path d="M1.7 8 A7.5 7.5 0 0 1 16.3 8 Z" fill="#3aa33a"/><path d="M6 1.5 L7 3 L9 1 L11 3 L12 1.5" fill="#3aa33a"/><text x="9" y="12.3" font-size="7.5" font-weight="bold" text-anchor="middle" fill="#111" font-family="Liberation Sans">HS</text></svg>
<svg width="18" height="18" style="left:342px;top:1056px"><path d="M13 1 L17 3 V15 L13 17 L5 10 L2 12.5 L1 12 V6 L2 5.5 L5 8 Z M13 5.5 L8.5 9 L13 12.5Z" fill="#23a2f0" fill-rule="evenodd"/></svg>
<svg width="16" height="16" style="left:380px;top:1057px"><circle cx="8" cy="8" r="7.5" fill="#8a3fc0"/><circle cx="8" cy="8.3" r="5.2" fill="#fff"/><path d="M5.2 5 L5.6 7 L10.4 7 L10.8 5 L9.5 6.2 L6.5 6.2Z M5.4 7.5 C5.4 10 6.2 10.8 7 11 V13.5 H9 V11 C9.8 10.8 10.6 10 10.6 7.5Z" fill="#8a3fc0"/></svg>
<div class="a" style="left:417px;top:1058px;width:15px;height:15px;background:#111"></div><div class="a" style="left:419.5px;top:1058px;width:10px;height:15px;background:linear-gradient(200deg,#1e8ad8 0%,#3cc63c 35%,#e0d020 65%,#ff5010 100%)"></div>
<div class="a" style="left:454px;top:1057px;width:16px;height:16px;border:1.5px solid #31c5f0;background:#001e36"></div>
<div class="t" style="left:457px;top:1061px;font-size:9px;font-weight:bold;color:#31c5f0">Ps</div>
<div class="a" style="left:489px;top:1057px;width:16px;height:16px;border:1.5px solid #ff7c00;background:#2e1300"></div>
<div class="t" style="left:492px;top:1061px;font-size:9px;font-weight:bold;color:#ff9a00">Ai</div>
<div class="t" style="left:509px;top:1059px;font-size:11.5px;letter-spacing:.05px;color:#fff">Sem título-1 @ 23,7%...</div>
<div class="a" style="left:485px;top:1078px;width:152px;height:2px;background:#76b9ed"></div>
<div class="a" style="left:652px;top:1057px;width:16px;height:16px;border:1.5px solid #ff3f94;background:#49021f"></div>
<div class="t" style="left:656px;top:1061px;font-size:9px;font-weight:bold;color:#ff3f94">Id</div>
<svg width="16" height="18" style="left:687px;top:1056px"><path d="M5.5 1 H10.5 V8.5 H15 L8 16.5 L1 8.5 H5.5Z" fill="#3e9fe8"/></svg>
<div class="t" style="left:707.5px;top:1059px;font-size:11.8px;color:#fff">Downloads</div>
<div class="a" style="left:683px;top:1078px;width:152px;height:2px;background:#76b9ed"></div>
<div class="a" style="left:844px;top:1050px;width:152px;height:30px;background:#9f2129"></div>
<div class="a" style="left:844px;top:1078px;width:152px;height:2px;background:#f20d16"></div>
<svg width="16" height="18" style="left:848px;top:1056px"><ellipse cx="8" cy="9" rx="7" ry="7.5" fill="none" stroke="#e0303a" stroke-width="1.6"/><ellipse cx="8" cy="9" rx="3.2" ry="6" fill="none" stroke="#e0303a" stroke-width="1.5"/></svg>
<div class="t" style="left:868px;top:1059px;font-size:11.1px;color:#fff">| Inserver Business Sa...</div>
<svg width="17" height="17" style="left:1009px;top:1057px"><circle cx="8.5" cy="8.5" r="8" fill="#db4437"/><path d="M8.5 8.5 L15.4 12.5 A8 8 0 0 1 1.6 12.5Z" fill="#0f9d58"/><path d="M8.5 8.5 L1.6 12.5 A8 8 0 0 1 8.5 0.5Z" fill="#db4437"/><path d="M8.5 8.5 L8.5 0.5 A8 8 0 0 1 15.4 12.5 Z" fill="#f4b400"/><circle cx="8.5" cy="8.5" r="3.6" fill="#fff"/><circle cx="8.5" cy="8.5" r="2.8" fill="#4285f4"/><rect x="10" y="9" width="7" height="8" rx="1" fill="#3f86d8"/></svg>
<div class="t" style="left:1029px;top:1059px;font-size:11.5px;color:#fff">.:: Prefeitura de Jandir...</div>
<div class="a" style="left:1005px;top:1078px;width:152px;height:2px;background:#76b9ed"></div>
<div class="a" style="left:1161px;top:1050px;width:160px;height:30px;background:#47515b"></div>
<svg width="17" height="17" style="left:1169px;top:1057px"><circle cx="8.5" cy="8.5" r="8" fill="#db4437"/><path d="M8.5 8.5 L15.4 12.5 A8 8 0 0 1 1.6 12.5Z" fill="#0f9d58"/><path d="M8.5 8.5 L8.5 0.5 A8 8 0 0 1 15.4 12.5 Z" fill="#f4b400"/><circle cx="8.5" cy="8.5" r="3.6" fill="#fff"/><circle cx="8.5" cy="8.5" r="2.8" fill="#4285f4"/><rect x="10" y="9" width="7" height="8" rx="1" fill="#3f86d8"/></svg>
<div class="t" style="left:1189px;top:1059px;font-size:11.5px;color:#fff">Painel | Inserver DEM...</div>
<div class="a" style="left:1161px;top:1078px;width:160px;height:2px;background:#76b9ed"></div>
<svg width="17" height="17" style="left:1330px;top:1057px"><rect x="5" y="1" width="11" height="15" fill="#fff"/><path d="M9 4 H14 M9 7 H14 M9 10 H14 M9 13 H14" stroke="#2b579a" stroke-width="1.2"/><rect x="0" y="2.5" width="10" height="12" fill="#2b579a"/><text x="5" y="11.5" font-size="8" font-weight="bold" fill="#fff" text-anchor="middle" font-family="Liberation Sans">W</text></svg>
<div class="t" style="left:1350px;top:1059px;font-size:11px;color:#fff">DESCRIÇÃO DA EMP...</div>
<div class="a" style="left:1326px;top:1078px;width:152px;height:2px;background:#76b9ed"></div>
<svg width="14" height="9" style="left:1725px;top:1060px"><path d="M1 8 L7 2 L13 8" fill="none" stroke="#fff" stroke-width="1.3"/></svg>
<svg width="18" height="16" style="left:1747px;top:1057px"><rect x="4" y="2" width="13" height="9" fill="none" stroke="#fff" stroke-width="1.2"/><path d="M10.5 11 V14 M7 14.5 H14 M1 1 H5 V5 H1Z M3 5 V14.5" fill="none" stroke="#fff" stroke-width="1.2"/></svg>
<svg width="18" height="16" style="left:1771px;top:1057px"><path d="M1 5.5 H4 L8.5 1.5 V14.5 L4 10.5 H1Z" fill="none" stroke="#fff" stroke-width="1.2"/><path d="M11 5 C12 6.5 12 9.5 11 11 M13.2 3.5 C15 6 15 10 13.2 12.5 M15.5 2 C18 5 18 11 15.5 14" fill="none" stroke="#fff" stroke-width="1.2"/></svg>
<div class="t" style="left:1798px;top:1059px;font-size:11.5px;letter-spacing:-.5px;color:#fff">POR</div>
<div class="t" style="left:1835px;top:1059px;font-size:11.5px;letter-spacing:-.6px;color:#fff">15:00</div>
<svg width="18" height="18" style="left:1878px;top:1056px"><path d="M1 1.5 H17 V14 H11 L9 16.5 L7 14 H1Z" fill="#fff"/><path d="M4 5 H14 M4 7.8 H14 M4 10.6 H11" stroke="#1b2840" stroke-width="1.1"/></svg>
<div class="a" style="left:1915px;top:1050px;width:1px;height:30px;background:#5a6578"></div>

</body></html>
